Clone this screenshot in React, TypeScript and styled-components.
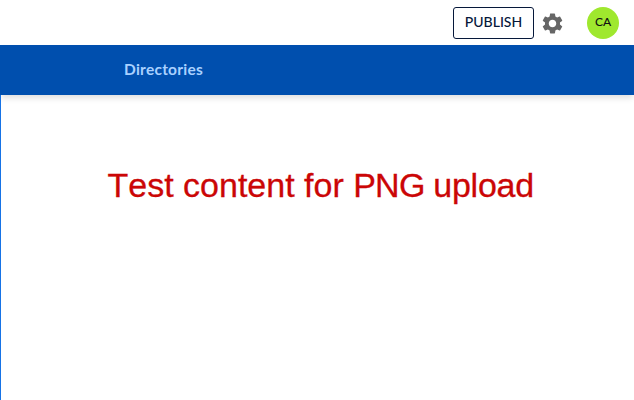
import React from "react";
import styled, { createGlobalStyle } from "styled-components";
import { MdSettings } from "react-icons/md";

const GlobalStyle = createGlobalStyle`
  *, *::before, *::after { box-sizing: border-box; }
  body { margin: 0; background: #fff; overflow: hidden; }
`;

const Page = styled.div`
  display: flex;
  flex-direction: column;
  height: 100vh;
  background: #fff;
  font-family: Lato, "Liberation Sans", sans-serif;
`;

const TopBar = styled.header`
  display: flex;
  align-items: center;
  justify-content: flex-end;
  flex: none;
  height: 45px;
  padding: 0 15px 0 0;
`;

const PublishButton = styled.button`
  width: 81px;
  height: 32px;
  padding: 0 0 1px;
  border: 1px solid #06183a;
  border-radius: 3px;
  background: #fff;
  color: #06183a;
  font: 500 14px/1 Lato, sans-serif;
`;

const SettingsButton = styled.button`
  display: flex;
  margin: 2px 22px 0 6px;
  padding: 0;
  border: 0;
  background: none;
  color: #666;
`;

const Avatar = styled.div`
  display: flex;
  align-items: center;
  justify-content: center;
  width: 32px;
  height: 32px;
  padding-bottom: 2px;
  border-radius: 50%;
  background: #9fe82e;
  color: #111;
  font-size: 12px;
  font-weight: 500;
`;

const NavBar = styled.nav`
  display: flex;
  align-items: center;
  flex: none;
  height: 50px;
  padding: 0 0 2px 124px;
  background: #004fae;
  box-shadow: 0 4px 6px -1px rgba(0, 0, 0, 0.13);
`;

const NavItem = styled.span`
  color: #a9d1ff;
  font-size: 15.5px;
  font-weight: 700;
  line-height: 20px;
  letter-spacing: 0.25px;
`;

const Content = styled.main`
  flex: 1;
  padding: 70px 0 0 106.5px;
  border-left: 1px solid #1673e6;
`;

const Message = styled.p`
  margin: 0;
  color: #cb0606;
  font: 34px/40px "Liberation Sans", Arial, sans-serif;
  font-kerning: none;
  white-space: nowrap;
  -webkit-text-stroke: 0.3px #cb0606;
`;

const Tracked = styled.span<{ $spacing: number }>`
  letter-spacing: ${(p) => p.$spacing}px;
`;

export default function App() {
  return (
    <Page>
      <GlobalStyle />
      <TopBar>
        <PublishButton>PUBLISH</PublishButton>
        <SettingsButton aria-label="Settings">
          <MdSettings size={25} />
        </SettingsButton>
        <Avatar>CA</Avatar>
      </TopBar>
      <NavBar>
        <NavItem>Directories</NavItem>
      </NavBar>
      <Content>
        <Message>
          <Tracked $spacing={0}>Test content for </Tracked>
          <Tracked $spacing={-0.75}>PNG </Tracked>
          <Tracked $spacing={-0.25}>upload</Tracked>
        </Message>
      </Content>
    </Page>
  );
}
